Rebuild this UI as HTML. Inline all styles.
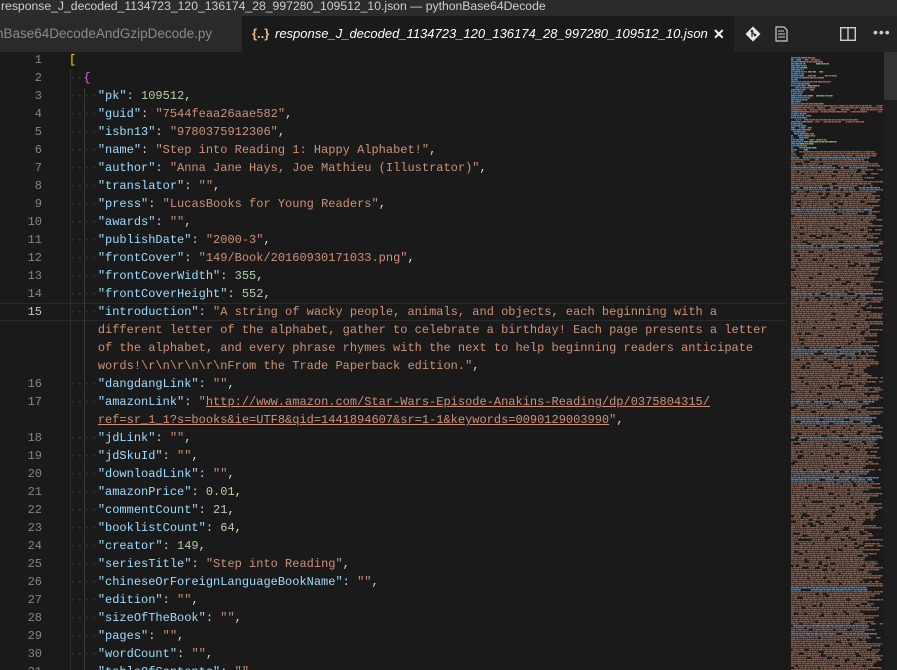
<!DOCTYPE html>
<html style="width:897px;height:670px;overflow:hidden"><head><meta charset="utf-8">
<style>
*{margin:0;padding:0;box-sizing:border-box}
body{width:897px;height:670px;overflow:hidden;background:#1a1a1a;font-family:"Liberation Sans",sans-serif;position:relative}
#title{position:absolute;left:0;top:0;width:897px;height:16px;background:#2c2c2c;color:#cfcfcf;font-size:12.2px;line-height:13px;white-space:nowrap;padding-left:1px}
#tabs{position:absolute;left:0;top:16px;width:897px;height:36px;background:#232323}
.tab1{position:absolute;left:0;top:0;width:242px;height:36px;background:#2a2a2a;color:#8a8a8a;font-size:13.5px;line-height:36px;white-space:nowrap;overflow:hidden;text-indent:-4px}
.tab2{position:absolute;left:242px;top:0;width:492px;height:36px;background:#1a1a1a;color:#fff;font-size:13px;line-height:36px;white-space:nowrap;font-style:italic}
.tab2 .ic{color:#e5c07b;font-style:normal;font-weight:bold;position:absolute;left:10px;font-size:13px}
.tab2 .nm{position:absolute;left:33px}
.tab2 .x{position:absolute;left:471px;font-style:normal;font-weight:bold;font-size:14px}
#ed{position:absolute;left:0;top:52px;width:897px;height:618px;background:#1a1a1a;overflow:hidden}
.ln{position:absolute;left:0;width:42px;text-align:right;color:#858585;font:12px/18px "Liberation Mono",monospace}
.cl{position:absolute;left:69px;white-space:pre;color:#d4d4d4;font:12px/18px "Liberation Mono",monospace}
.k{color:#9cdcfe}.s{color:#ce9178}.n{color:#b5cea8}.y{color:#ffd700}.p{color:#da70d6}
.u{text-decoration:underline}
.d{color:#3c3c3c}
#mm{position:absolute;left:788px;top:0;width:96px;height:618px}
#sb{position:absolute;left:884px;top:0;width:13px;height:618px;background:#1e1e1e}
</style></head><body>
<div id="title">response_J_decoded_1134723_120_136174_28_997280_109512_10.json — pythonBase64Decode</div>
<div id="tabs">
<div class="tab1">nBase64DecodeAndGzipDecode.py</div>
<div class="tab2"><span class="ic">{..}</span><span class="nm">response_J_decoded_1134723_120_136174_28_997280_109512_10.json</span><span class="x">✕</span></div>
<svg style="position:absolute;left:745px;top:10px" width="16" height="16" viewBox="0 0 16 16"><path d="M8 0.5L15.5 8L8 15.5L0.5 8Z" fill="#e8e8e8"/><circle cx="7" cy="5" r="1.3" fill="#232323"/><circle cx="10" cy="9" r="1.3" fill="#232323"/><path d="M7 5v6M7 6l3 3" stroke="#232323" stroke-width="1.2"/></svg>
<svg style="position:absolute;left:775px;top:10px" width="13" height="16" viewBox="0 0 13 16"><path d="M1 1h8l3 3v11H1z" fill="none" stroke="#ccc" stroke-width="1.2"/><path d="M3 5h6M3 8h7M3 11h7" stroke="#ccc" stroke-width="1"/></svg>
<svg style="position:absolute;left:840px;top:11px" width="16" height="14" viewBox="0 0 16 14"><rect x="0.7" y="0.7" width="14.6" height="12.6" fill="none" stroke="#ccc" stroke-width="1.4"/><path d="M8 1v12" stroke="#ccc" stroke-width="1.4"/></svg>
<div style="position:absolute;left:873px;top:8px;color:#ccc;font-size:14px;letter-spacing:1px">•••</div>
</div>
<div id="ed">
<div style="position:absolute;left:0;top:251px;width:786px;height:18px;border-top:1px solid #2a2a2a;border-bottom:1px solid #2a2a2a"></div>
<div style="position:absolute;left:70px;top:18px;width:1px;height:600px;background:#2e2e2e"></div>
<div style="position:absolute;left:84px;top:36px;width:1px;height:582px;background:#3a3a3a"></div>
<div id="lines"></div>
<svg id="mm" width="96" height="618"></svg>
<div id="sb"><div style="position:absolute;left:0;top:0;width:13px;height:48px;background:#333"></div></div>
</div>
<script>
var L=[
[1,'<span class="y">[</span>'],
[2,'<span class="d">··</span><span class="p">{</span>'],
[3,'K"pk"</span>: <span class="n">109512</span>,'],
[4,'K"guid"</span>: <span class="s">"7544feaa26aae582"</span>,'],
[5,'K"isbn13"</span>: <span class="s">"9780375912306"</span>,'],
[6,'K"name"</span>: <span class="s">"Step into Reading 1: Happy Alphabet!"</span>,'],
[7,'K"author"</span>: <span class="s">"Anna Jane Hays, Joe Mathieu (Illustrator)"</span>,'],
[8,'K"translator"</span>: <span class="s">""</span>,'],
[9,'K"press"</span>: <span class="s">"LucasBooks for Young Readers"</span>,'],
[10,'K"awards"</span>: <span class="s">""</span>,'],
[11,'K"publishDate"</span>: <span class="s">"2000-3"</span>,'],
[12,'K"frontCover"</span>: <span class="s">"149/Book/20160930171033.png"</span>,'],
[13,'K"frontCoverWidth"</span>: <span class="n">355</span>,'],
[14,'K"frontCoverHeight"</span>: <span class="n">552</span>,'],
[15,'K"introduction"</span>: <span class="s">"A string of wacky people, animals, and objects, each beginning with a</span>'],
[0,'W<span class="s">different letter of the alphabet, gather to celebrate a birthday! Each page presents a letter</span>'],
[0,'W<span class="s">of the alphabet, and every phrase rhymes with the next to help beginning readers anticipate</span>'],
[0,'W<span class="s">words!\\r\\n\\r\\n\\r\\nFrom the Trade Paperback edition."</span>,'],
[16,'K"dangdangLink"</span>: <span class="s">""</span>,'],
[17,'K"amazonLink"</span>: <span class="s">"<span class="u">http://www.amazon.com/Star-Wars-Episode-Anakins-Reading/dp/0375804315/</span></span>'],
[0,'W<span class="s"><span class="u">ref=sr_1_1?s=books&amp;ie=UTF8&amp;qid=1441894607&amp;sr=1-1&amp;keywords=0090129003990</span>"</span>,'],
[18,'K"jdLink"</span>: <span class="s">""</span>,'],
[19,'K"jdSkuId"</span>: <span class="s">""</span>,'],
[20,'K"downloadLink"</span>: <span class="s">""</span>,'],
[21,'K"amazonPrice"</span>: <span class="n">0.01</span>,'],
[22,'K"commentCount"</span>: <span class="n">21</span>,'],
[23,'K"booklistCount"</span>: <span class="n">64</span>,'],
[24,'K"creator"</span>: <span class="n">149</span>,'],
[25,'K"seriesTitle"</span>: <span class="s">"Step into Reading"</span>,'],
[26,'K"chineseOrForeignLanguageBookName"</span>: <span class="s">""</span>,'],
[27,'K"edition"</span>: <span class="s">""</span>,'],
[28,'K"sizeOfTheBook"</span>: <span class="s">""</span>,'],
[29,'K"pages"</span>: <span class="s">""</span>,'],
[30,'K"wordCount"</span>: <span class="s">""</span>,'],
[31,'K"tableOfContents"</span>: <span class="s">""</span>,']
];
var h='';
L.forEach(function(l,i){
 var t=i*18-1;
 if(l[0])h+='<div class="ln" style="top:'+t+'px;'+(l[0]==15?'color:#c6c6c6':'')+'">'+l[0]+'</div>';
 var c=l[1];
 if(c[0]=='K')c='<span class="d">····</span><span class="k">'+c.slice(1);
 else if(c[0]=='W')c='    '+c.slice(1);
 h+='<div class="cl" style="top:'+t+'px">'+c+'</div>';
});
document.getElementById('lines').innerHTML=h;
var s='',r=7;function rnd(){r=(r*9301+49297)%233280;return r/233280;}
function seg(x0,x1,y,col,fill){var xx=x0;while(xx<x1&&xx<95){var sw=1+rnd()*4;if(rnd()<fill)s+='<rect x="'+xx.toFixed(1)+'" y="'+y+'" width="'+Math.min(sw,95-xx).toFixed(1)+'" height="1.5" fill="'+col+'"/>';xx+=sw+0.5;}}
for(var y=5;y<618;y+=2){
 var row=(y-5)/2;
 if(y<98){
  var kx=3,kw=5+rnd()*12;
  seg(kx,kx+kw,y,'#4e86b8',0.9);
  if(row==24||row==25||row==26||row==27){seg(kx,93,y,'#9a5a48',0.9);}
  else if(row==31||row==32){seg(kx+kw+2,kx+kw+60,y,'#9a5a48',0.85);}
  else if(rnd()<0.55){seg(kx+kw+2,kx+kw+4+rnd()*30,y,rnd()<0.3?'#7f9a78':'#9a6a55',0.85);}
 } else {
  var w=70+rnd()*24;
  seg(3,3+w,y,rnd()<0.06?'#4e86b8':'#8a5a48',0.92);
 }
}
document.getElementById('mm').innerHTML=s;
</script>
</body></html>
